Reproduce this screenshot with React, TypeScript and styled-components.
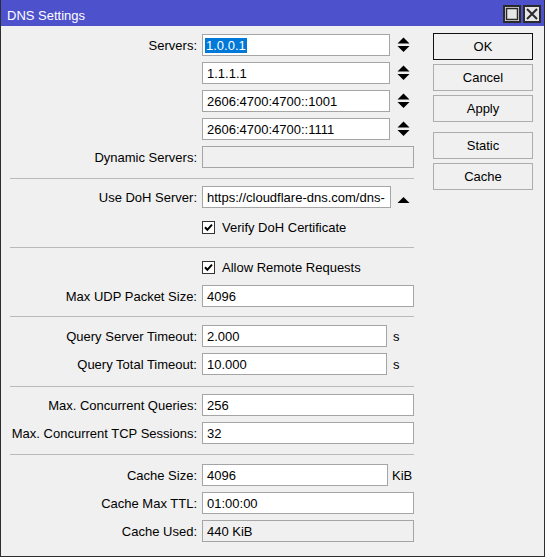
import React from "react";
import styled, { createGlobalStyle } from "styled-components";

const Global = createGlobalStyle`
  html, body { margin: 0; padding: 0; background: #f0f0f0; }
  body {
    font-family: "Liberation Sans", Arial, sans-serif;
    font-size: 13px;
    color: #000;
  }
`;

const Window = styled.div`
  width: 545px;
  height: 557px;
  box-sizing: border-box;
  border: 1px solid #2e2e2e;
  border-top: none;
  background: #f0f0f0;
  display: flex;
  flex-direction: column;
`;

const TitleBar = styled.div`
  height: 26px;
  flex: none;
  background: #4e51cc;
  display: flex;
  align-items: flex-start;
  padding: 0 3px 0 6px;
`;

const Title = styled.div`
  flex: 1;
  color: #fff;
  font-size: 13px;
  line-height: 16px;
  padding-top: 8px;
`;

const TitleButtons = styled.div`
  display: flex;
  gap: 2px;
  margin-top: 5px;
`;

const TitleButton = styled.div`
  width: 18px;
  height: 18px;
  box-sizing: border-box;
  border: 2px solid #2b2b2b;
  background: #e6e6e6;
  display: flex;
  align-items: center;
  justify-content: center;
`;

const Body = styled.div`
  flex: 1;
  display: flex;
`;

const Form = styled.div`
  width: 420px;
  display: flex;
  flex-direction: column;
`;

const Section = styled.div<{ $pt: number; $pb: number; $gap?: number }>`
  display: flex;
  flex-direction: column;
  padding-top: ${(p) => p.$pt}px;
  padding-bottom: ${(p) => p.$pb}px;
  gap: ${(p) => (p.$gap ?? 6)}px;
`;

const Divider = styled.div`
  height: 1px;
  width: 404px;
  margin-left: 9px;
  background: #b9b9b9;
`;

const Row = styled.div<{ $h?: number }>`
  display: grid;
  grid-template-columns: 196px auto;
  column-gap: 5px;
  align-items: center;
  height: ${(p) => p.$h ?? 22}px;
`;

const Label = styled.div`
  text-align: right;
  white-space: nowrap;
`;

const Control = styled.div<{ $gap?: number }>`
  display: flex;
  align-items: center;
  gap: ${(p) => p.$gap ?? 6}px;
`;

const Field = styled.div<{ $w: number; $ro?: boolean }>`
  width: ${(p) => p.$w}px;
  height: 22px;
  box-sizing: border-box;
  border: 1px solid #a5a5a5;
  background: ${(p) => (p.$ro ? "#f0f0f0" : "#ffffff")};
  padding: 0 4px;
  display: flex;
  align-items: center;
  overflow: hidden;
  white-space: nowrap;
`;

const Selected = styled.span`
  background: #0078d7;
  color: #fff;
  margin-left: -2px;
  padding: 0 1px;
  line-height: 15px;
`;

const Suffix = styled.span`
  white-space: nowrap;
`;

const Check = styled.div`
  width: 13px;
  height: 13px;
  box-sizing: border-box;
  border: 1px solid #333;
  background: #fff;
  display: flex;
  align-items: center;
  justify-content: center;
`;

const ButtonCol = styled.div`
  margin-left: 12px;
  width: 100px;
  padding-top: 7px;
  display: flex;
  flex-direction: column;
  gap: 4px;
`;

const Button = styled.div<{ $default?: boolean; $mt?: number }>`
  height: 27px;
  box-sizing: border-box;
  border: 1px solid ${(p) => (p.$default ? "#111" : "#adadad")};
  background: #f0f0f0;
  display: flex;
  align-items: center;
  justify-content: center;
  margin-top: ${(p) => p.$mt ?? 0}px;
`;

const Spin = () => (
  <svg width="13" height="22" viewBox="0 0 13 22">
    <polygon points="0.5,9.5 6.5,3.5 12.5,9.5" fill="#000" />
    <polygon points="0.5,12 12.5,12 6.5,18" fill="#000" />
  </svg>
);

const UpArrow = () => (
  <svg width="13" height="22" viewBox="0 0 13 22">
    <polygon points="0.5,17 6.5,11 12.5,17" fill="#000" />
  </svg>
);

const CheckMark = () => (
  <svg width="11" height="11" viewBox="0 0 11 11">
    <path d="M2 5.2 L4.4 7.8 L9 2.6" fill="none" stroke="#000" strokeWidth="2" />
  </svg>
);

const MaxIcon = () => (
  <svg width="14" height="14" viewBox="0 0 14 14">
    <rect x="1.5" y="1.5" width="11" height="11" fill="none" stroke="#2b2b2b" strokeWidth="1.5" />
  </svg>
);

const CloseIcon = () => (
  <svg width="14" height="14" viewBox="0 0 14 14">
    <path d="M2 2 L12 12 M12 2 L2 12" stroke="#2b2b2b" strokeWidth="2" />
  </svg>
);

type FieldRowProps = { label: string; value: string; w?: number; ro?: boolean; suffix?: React.ReactNode; gap?: number };

const FieldRow = ({ label, value, w = 212, ro, suffix, gap }: FieldRowProps) => (
  <Row>
    <Label>{label}</Label>
    <Control $gap={gap}>
      <Field $w={w} $ro={ro}>{value}</Field>
      {suffix}
    </Control>
  </Row>
);

const CheckRow = ({ text }: { text: string }) => (
  <Row $h={23}>
    <span />
    <Control $gap={7}>
      <Check>
        <CheckMark />
      </Check>
      <span>{text}</span>
    </Control>
  </Row>
);

export default function App() {
  return (
    <>
      <Global />
      <Window>
        <TitleBar>
          <Title>DNS Settings</Title>
          <TitleButtons>
            <TitleButton>
              <MaxIcon />
            </TitleButton>
            <TitleButton>
              <CloseIcon />
            </TitleButton>
          </TitleButtons>
        </TitleBar>
        <Body>
          <Form>
            <Section $pt={8} $pb={10}>
              <Row>
                <Label>Servers:</Label>
                <Control $gap={7}>
                  <Field $w={188}>
                    <Selected>1.0.0.1</Selected>
                  </Field>
                  <Spin />
                </Control>
              </Row>
              <FieldRow label="" value="1.1.1.1" w={188} gap={7} suffix={<Spin />} />
              <FieldRow label="" value="2606:4700:4700::1001" w={188} gap={7} suffix={<Spin />} />
              <FieldRow label="" value="2606:4700:4700::1111" w={188} gap={7} suffix={<Spin />} />
              <FieldRow label="Dynamic Servers:" value="" ro />
            </Section>
            <Divider />
            <Section $pt={7} $pb={8} $gap={8}>
              <FieldRow label="Use DoH Server:" value="https://cloudflare-dns.com/dns-" w={189} gap={6} suffix={<UpArrow />} />
              <CheckRow text="Verify DoH Certificate" />
            </Section>
            <Divider />
            <Section $pt={8} $pb={9}>
              <CheckRow text="Allow Remote Requests" />
              <FieldRow label="Max UDP Packet Size:" value="4096" />
            </Section>
            <Divider />
            <Section $pt={8} $pb={11}>
              <FieldRow label="Query Server Timeout:" value="2.000" w={185} suffix={<Suffix>s</Suffix>} />
              <FieldRow label="Query Total Timeout:" value="10.000" w={185} suffix={<Suffix>s</Suffix>} />
            </Section>
            <Divider />
            <Section $pt={7} $pb={10}>
              <FieldRow label="Max. Concurrent Queries:" value="256" />
              <FieldRow label="Max. Concurrent TCP Sessions:" value="32" />
            </Section>
            <Divider />
            <Section $pt={9} $pb={0}>
              <FieldRow label="Cache Size:" value="4096" w={186} gap={4} suffix={<Suffix>KiB</Suffix>} />
              <FieldRow label="Cache Max TTL:" value="01:00:00" />
              <FieldRow label="Cache Used:" value="440 KiB" ro />
            </Section>
          </Form>
          <ButtonCol>
            <Button $default>OK</Button>
            <Button>Cancel</Button>
            <Button>Apply</Button>
            <Button $mt={6}>Static</Button>
            <Button>Cache</Button>
          </ButtonCol>
        </Body>
      </Window>
    </>
  );
}
